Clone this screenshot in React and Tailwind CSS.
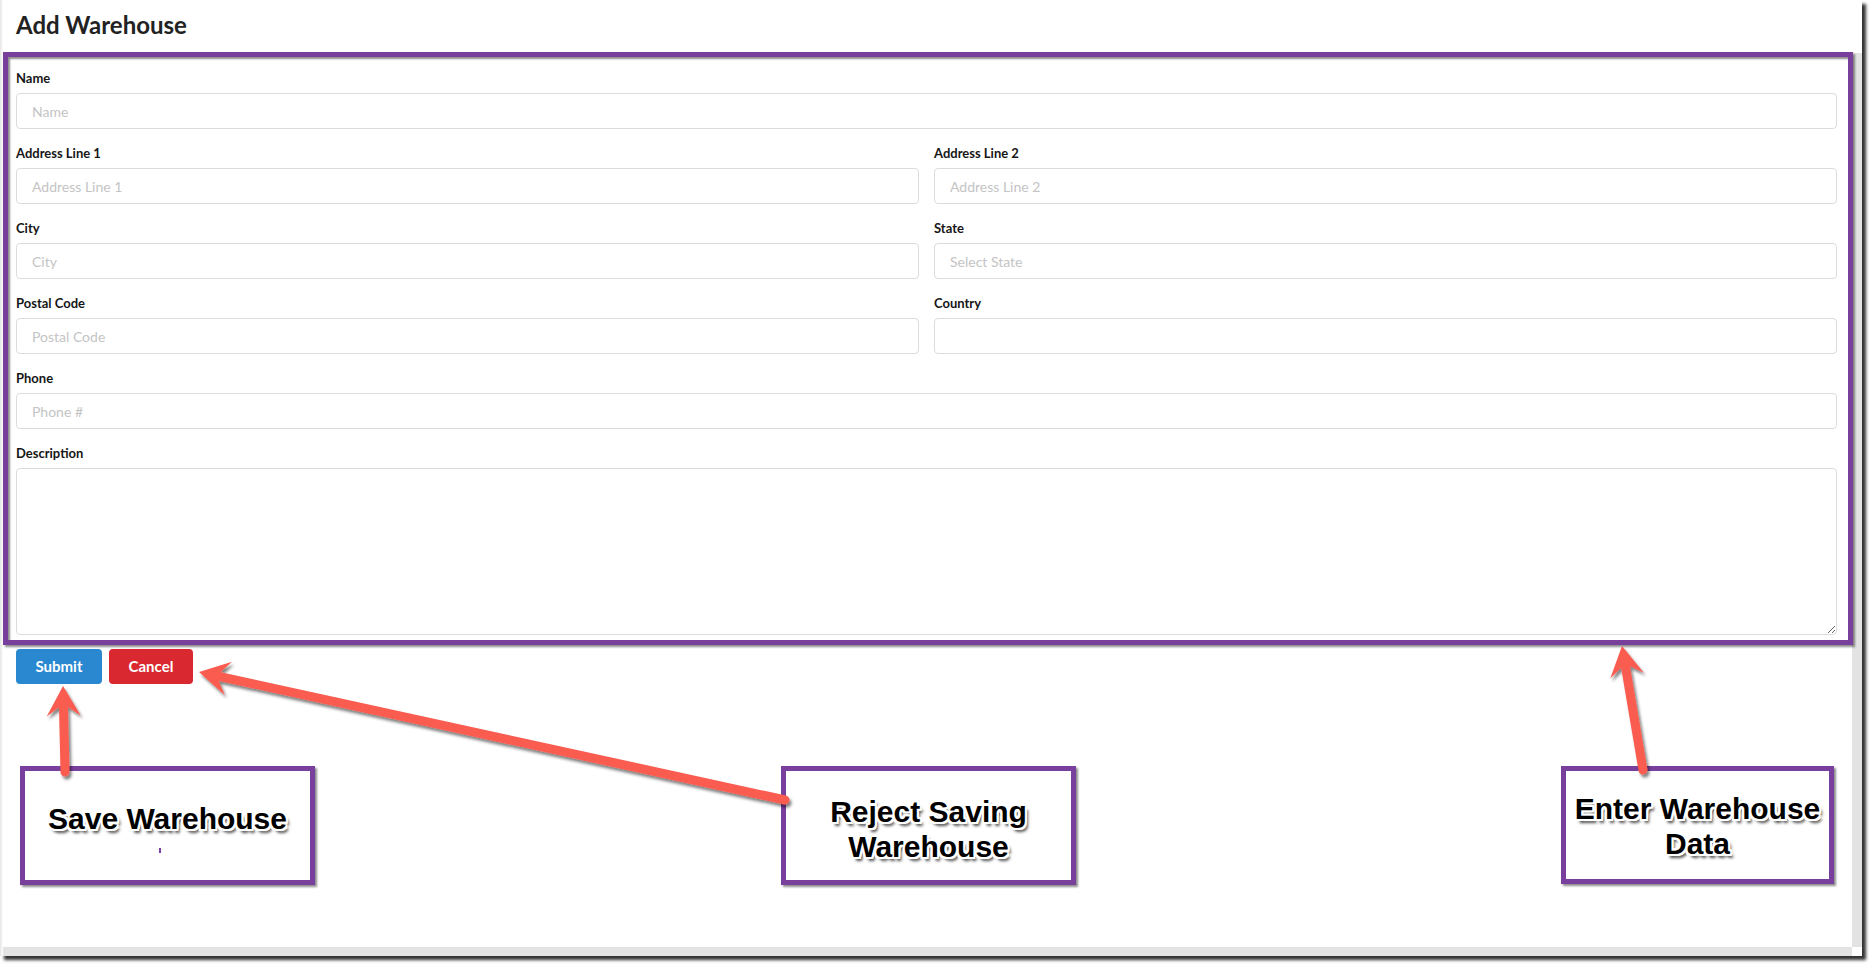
import React from "react";

const PURPLE = "#793f9c";

function arrowParts(S, T, L = 30, W = 17) {
  const dx = T[0] - S[0];
  const dy = T[1] - S[1];
  const len = Math.hypot(dx, dy);
  const d = [dx / len, dy / len];
  const n = [-d[1], d[0]];
  const p = (a, b) => [T[0] - d[0] * a + n[0] * b, T[1] - d[1] * a + n[1] * b];
  const pts = [T, p(L, W), p(L * 0.72, 5), p(L * 0.72, -5), p(L, -W)];
  const shaftEnd = p(L * 0.6, 0);
  return { pts: pts.map((q) => q.join(",")).join(" "), shaftEnd };
}

function Arrow({ S, T }) {
  const { pts, shaftEnd } = arrowParts(S, T);
  return (
    <g>
      <line x1={S[0]} y1={S[1]} x2={shaftEnd[0]} y2={shaftEnd[1]} stroke="#fa5b50" strokeWidth="9" strokeLinecap="round" />
      <polygon points={pts} fill="#fa5b50" />
    </g>
  );
}

function Field({ label, placeholder, className = "" }) {
  return (
    <div className={"mb-[15px] " + className}>
      <label className="block text-[13px] leading-[19px] font-bold text-[#161616] mb-[5px]">{label}</label>
      <input
        placeholder={placeholder}
        className="block w-full h-[36px] border border-[#dcdcdc] rounded-[4px] px-[15px] text-[14px] text-[#333] placeholder:text-[#c4c4c4] outline-none bg-white"
      />
    </div>
  );
}

const calloutText =
  "font-['Liberation_Sans',Arial,sans-serif] font-bold text-[30px] leading-[35px] text-black text-center [text-shadow:2px_0_0_#fff,-2px_0_0_#fff,0_2px_0_#fff,0_-2px_0_#fff,2px_2px_0_#fff,-2px_-2px_0_#fff,2px_-2px_0_#fff,-2px_2px_0_#fff,3px_4px_3px_rgba(0,0,0,0.7)]";

export default function App() {
  return (
    <div className="relative w-[1872px] h-[968px] bg-white overflow-hidden font-['Lato','Open_Sans',sans-serif]">
      <div className="flex w-[1862px] h-[956px] bg-white shadow-[4px_4px_3px_rgba(0,0,0,0.8)]">
        <div className="w-[3px] bg-linear-to-r from-[#e4e4e4] to-white" />
        <div className="flex-1 flex flex-col">
          <div className="flex-1 flex">
            <div className="flex-1 pl-[13px] pr-[15px]">
              <div className="h-[53px] pt-[10px]">
                <h1 className="text-[24px] leading-[29px] font-bold text-[#222]">Add Warehouse</h1>
              </div>
              <form className="pt-[16px]">
                <Field label="Name" placeholder="Name" />
                <div className="grid grid-cols-2 gap-x-[15px]">
                  <Field label="Address Line 1" placeholder="Address Line 1" />
                  <Field label="Address Line 2" placeholder="Address Line 2" />
                  <Field label="City" placeholder="City" />
                  <Field label="State" placeholder="Select State" />
                  <Field label="Postal Code" placeholder="Postal Code" />
                  <Field label="Country" placeholder="" />
                </div>
                <Field label="Phone" placeholder="Phone #" />
                <div className="mb-[14px]">
                  <label className="block text-[13px] leading-[19px] font-bold text-[#161616] mb-[5px]">Description</label>
                  <textarea className="block w-full h-[167px] border border-[#dcdcdc] rounded-[4px] px-[15px] py-[8px] text-[14px] outline-none bg-white" />
                </div>
                <div className="flex gap-[7px]">
                  <button type="button" className="w-[86px] h-[35px] rounded-[4px] bg-[#2a88d0] text-white text-[15px] font-bold">Submit</button>
                  <button type="button" className="w-[84px] h-[35px] rounded-[4px] bg-[#d9282f] text-white text-[15px] font-bold">Cancel</button>
                </div>
              </form>
            </div>
            <div className="w-[10px] flex flex-col">
              <div className="h-[53px] bg-white" />
              <div className="flex-1 bg-[#e3e3e3]" />
            </div>
          </div>
          <div className="h-[9px] flex">
            <div className="flex-1 bg-[#e3e3e3]" />
            <div className="w-[10px] bg-white" />
          </div>
        </div>
      </div>

      {/* annotation: form highlight */}
      <div
        className="absolute left-[3px] top-[52px] w-[1850px] h-[593px] border-[5px] pointer-events-none shadow-[2px_2px_2px_rgba(0,0,0,0.45),inset_2px_2px_2px_rgba(0,0,0,0.45)]"
        style={{ borderColor: PURPLE }}
      />

      {/* callouts */}
      <div className="absolute left-[20px] top-[766px] w-[295px] h-[119px] bg-white border-[5px] border-[#793f9c] shadow-[2px_2px_2px_rgba(0,0,0,0.45)] pt-[30px]">
        <div className={calloutText}>Save Warehouse</div>
        <span className="absolute left-[134px] top-[77px] w-[2px] h-[5px] bg-[#793f9c]" />
      </div>
      <div className="absolute left-[781px] top-[766px] w-[295px] h-[119px] bg-white border-[5px] border-[#793f9c] shadow-[2px_2px_2px_rgba(0,0,0,0.45)] pt-[23px]">
        <div className={calloutText}>Reject Saving<br />Warehouse</div>
      </div>
      <div className="absolute left-[1561px] top-[766px] w-[273px] h-[118px] bg-white border-[5px] border-[#793f9c] shadow-[2px_2px_2px_rgba(0,0,0,0.45)] pt-[20px]">
        <div className={calloutText}>Enter Warehouse<br />Data</div>
      </div>

      {/* arrows */}
      <svg className="absolute inset-0 pointer-events-none" width="1872" height="968">
        <defs>
          <filter id="ash" x="-20%" y="-20%" width="140%" height="140%">
            <feDropShadow dx="2" dy="3" stdDeviation="1.5" floodColor="#000" floodOpacity="0.5" />
          </filter>
        </defs>
        <g filter="url(#ash)">
          <Arrow S={[65, 772]} T={[63, 686]} />
          <Arrow S={[785, 800]} T={[199, 672]} />
          <Arrow S={[1643, 770]} T={[1622, 646]} />
        </g>
      </svg>
    </div>
  );
}
